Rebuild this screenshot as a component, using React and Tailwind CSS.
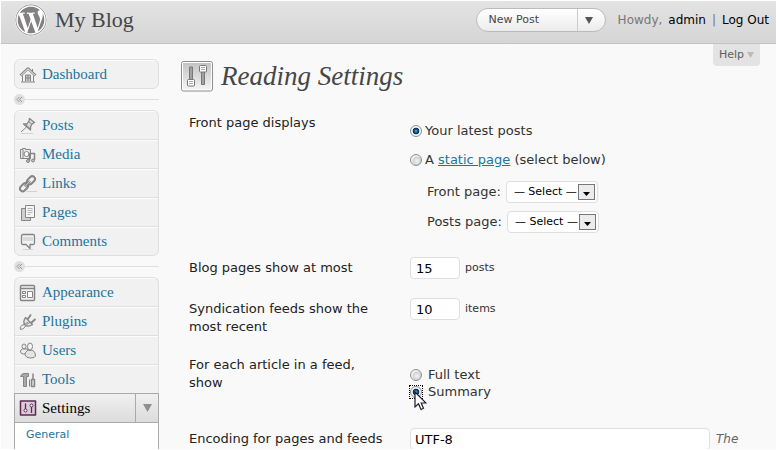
import React from 'react';
import { FaWordpress } from 'react-icons/fa';

const icons = {
  dashboard: (
    <>
      <path d="M1.500 9.500 9 2.500l7.500 7" strokeWidth="2.600" stroke="#8a8a8a" />
      <path d="M2 9.300 9 2.800l7 6.500" strokeWidth="1" stroke="#f2f2f2" />
      <path d="M3.500 9.500v6M14.500 9.500v6M2 16h14M13.500 3v3" />
      <path d="M6.500 15.500V9h5v6.500M9 9v6.500M6.500 12h5" fill="#c9c9c9" />
    </>
  ),
  posts: (
    <>
      <path d="M10.500 1.500 15.500 5.500l-2.500 1.500-1.500 3v3l-7-6h3.500l2-3z" fill="#dcdcdc" strokeWidth="1.300" />
      <path d="M9.500 4.500l3.500 3M7 8l4 3.500M7.500 10 2 15" />
      <path d="M2 16.500h12" stroke="#d2d2d2" />
    </>
  ),
  media: (
    <>
      <path d="M1.500 3.500h2v-1h3v1h5v9h-10z" fill="#e9e9e9" />
      <path d="M4 3.500v9" />
      <circle cx="7.500" cy="8" r="2.500" fill="#fff" />
      <path d="M10.500 15V7.500h5V14" strokeWidth="1.500" />
      <circle cx="9" cy="15" r="1.500" fill="#bbb" />
      <circle cx="14" cy="14.500" r="1.500" fill="#bbb" />
    </>
  ),
  links: (
    <>
      <rect x="7.500" y="2.500" width="9" height="5.500" rx="2.700" transform="rotate(-45 12 5.300)" strokeWidth="2" />
      <rect x="0.500" y="9.500" width="9" height="5.500" rx="2.700" transform="rotate(-45 5 12.300)" strokeWidth="2" />
      <path d="M6 11.500l5-5.500" stroke="#777" strokeWidth="2.600" />
      <path d="M6 11.500l5-5.500" stroke="#e6e6e6" />
      <path d="M8 16.500h10" stroke="#d2d2d2" />
    </>
  ),
  pages: (
    <>
      <path d="M2.500 4.500h9v12h-9z" fill="#cfcfcf" />
      <path d="M6.500 1.500h9v12h-9z" fill="#f6f6f6" />
      <path d="M8.500 4.500h5M8.500 6.500h5M8.500 8.500h5M8.500 10.500h3" stroke="#b5b5b5" />
    </>
  ),
  comments: (
    <>
      <path d="M4 1.500h10q1.500 0 1.500 1.500v7q0 1.500-1.500 1.500h-3v4l-4-4H4q-1.500 0-1.500-1.500V3q0-1.500 1.500-1.500z" fill="#f2f2f2" strokeWidth="1.300" />
      <path d="M4 4h10v4H4z" fill="#dadada" stroke="none" />
      <path d="M4 16.500h10" stroke="#d2d2d2" />
    </>
  ),
  appearance: (
    <>
      <rect x="1.500" y="1.500" width="14" height="15" rx="1" fill="#f3f3f3" strokeWidth="1.500" />
      <path d="M2 4.500h13" strokeWidth="1.500" />
      <path d="M3.500 7.500h3v2h-3zM3.500 11.500h3v2h-3zM8.500 7.500h5v6h-5z" fill="#fff" />
    </>
  ),
  plugins: (
    <>
      <path d="M6.500 4.500 13.500 11.500Q9 14.500 6 12 3.500 9 6.500 4.500z" fill="#e6e6e6" strokeWidth="1.300" />
      <path d="M8.500 6.500l3.500-5M12 10l4.500-4" strokeWidth="1.800" />
      <path d="M9 9l-3.500 2.500M11 9.500l-3.500 2" />
      <path d="M5 11.500Q0 13 1.500 16.500M6.500 13Q5 16.500 1.500 16.500" />
    </>
  ),
  users: (
    <>
      <ellipse cx="5" cy="4.500" rx="2" ry="2.500" fill="#eee" />
      <path d="M3.500 7Q1 8 1.500 10t3 2l4-1V7z" fill="#eee" />
      <ellipse cx="11" cy="4.500" rx="2.500" ry="3.500" fill="#f5f5f5" />
      <path d="M9 8Q5.500 10.500 6 13q1 3 5.500 3t5-2q.5-4-3.500-6-2 1-4 0z" fill="#e4e4e4" />
    </>
  ),
  tools: (
    <>
      <path d="M1.500 5.500Q2.500 2.500 5 2.500h4.500v3H7.500v10h-3v-10z" fill="#a9a9a9" />
      <path d="M12.500 8.500h3v7h-3zM14 8.500V2.500" fill="#ddd" strokeWidth="1.500" />
      <path d="M10.500 15.500v-7" />
    </>
  ),
  settings: (
    <>
      <rect x="1.500" y="2" width="15" height="14" fill="#dccbd8" stroke="#5a2a50" strokeWidth="1.500" />
      <path d="M6.500 4.500v5.500M12.500 8v6" stroke="#5a2a50" strokeWidth="1.300" />
      <circle cx="6.500" cy="11.500" r="1.500" fill="#fff" stroke="#5a2a50" />
      <circle cx="12.500" cy="6.500" r="1.500" fill="#fff" stroke="#5a2a50" />
    </>
  ),
};

const MenuIcon = ({ name }) => (
  <svg width="18" height="18" viewBox="0 0 18 18" fill="none" stroke="#858585" strokeLinejoin="round" aria-hidden="true">
    {icons[name]}
  </svg>
);

const MenuItem = ({ icon, label }) => (
  <li className="border-b border-[#dfdfdf] last:border-b-0">
    <a
      href={`#${icon}`}
      className="flex h-7 items-center gap-[5px] border-t border-[#fcfcfc] pl-1 font-['Liberation_Serif',serif] text-[15px] text-[#21759b]"
    >
      <MenuIcon name={icon} />
      {label}
    </a>
  </li>
);

const Separator = () => (
  <div className="flex h-[21px] items-center">
    <button type="button" aria-label="Collapse menu" className="flex size-[11px] items-center justify-center rounded-full bg-[#dfdfdf]">
      <svg width="7" height="7" viewBox="0 0 7 7" fill="none" stroke="#999" aria-hidden="true">
        <path d="M3.500 1 1 3.500 3.500 6M6 1 3.500 3.500 6 6" />
      </svg>
    </button>
    <span className="h-px flex-1 bg-[#dfdfdf]" />
  </div>
);

const Radio = ({ id, name, defaultChecked }) => (
  <input
    type="radio"
    id={id}
    name={name}
    defaultChecked={defaultChecked}
    className="size-3 shrink-0 appearance-none rounded-full border border-[#8e8f8f] bg-[radial-gradient(circle_at_60%_60%,#f4f4f4_0%,#d0d2d4_45%,#f4f4f4_62%)] checked:bg-[radial-gradient(circle,#4fc0ee_0%,#0f5f92_22%,#0b2b4c_42%,#f4f4f4_52%)]"
  />
);

const PageSelect = ({ id, label }) => (
  <div className="flex items-center gap-[5px]">
    <label htmlFor={id}>{label}</label>
    <div className="relative">
      <select
        id={id}
        className="block h-[22px] w-[92px] appearance-none rounded border border-[#dfdfdf] bg-white pl-[7px] text-[11px] text-black"
      >
        <option>— Select —</option>
      </select>
      <span className="pointer-events-none absolute top-[3px] right-[3px] flex h-4 w-[17px] items-center justify-center border border-[#777] bg-[#ececec] pt-1">
        <svg width="7" height="4" viewBox="0 0 7 4" aria-hidden="true">
          <path d="M0 0h7L3.500 4z" fill="#000" />
        </svg>
      </span>
    </div>
  </div>
);

const Header = () => (
  <header className="flex h-11 items-start justify-between border-t border-b border-t-white border-b-[#c3c3c3] bg-linear-to-b from-[#e3e3e3] to-[#d5d5d5] pr-[7px] pl-[14px]">
    <div className="flex items-center gap-2 pt-[3px]">
      <FaWordpress className="size-8 rounded-full bg-white text-[#828080]" />
      <h1 className="font-['Liberation_Serif',serif] text-[22px] leading-8 text-[#464646]">
        <a href="#blog">My Blog</a>
      </h1>
    </div>
    <div className="flex items-center gap-3 pt-[7px]">
      <div className="flex h-6 w-[130px] rounded-full border border-[#bbb] bg-linear-to-b from-white to-[#ececec] text-[11px] text-[#464646]">
        <button type="button" className="flex-1 pl-3 text-left">New Post</button>
        <button type="button" aria-label="More actions" className="flex w-7 items-center justify-center border-l border-[#ccc] pr-1">
          <svg width="8" height="7" viewBox="0 0 8 7" aria-hidden="true">
            <path d="M0 0h8L4 7z" fill="#555" />
          </svg>
        </button>
      </div>
      <div className="flex gap-[6px] text-[12px] whitespace-nowrap text-[#777]">
        <span>Howdy,</span>
        <a href="#profile" className="text-black">admin</a>
        <span>|</span>
        <a href="#logout" className="text-black">Log Out</a>
      </div>
    </div>
  </header>
);

const Sidebar = () => (
  <nav className="w-[145px] shrink-0 pt-[15px]">
    <ul className="overflow-hidden rounded-md border border-[#dfdfdf] bg-[#f1f1f1]">
      <MenuItem icon="dashboard" label="Dashboard" />
    </ul>
    <Separator />
    <ul className="overflow-hidden rounded-md border border-[#dfdfdf] bg-[#f1f1f1]">
      <MenuItem icon="posts" label="Posts" />
      <MenuItem icon="media" label="Media" />
      <MenuItem icon="links" label="Links" />
      <MenuItem icon="pages" label="Pages" />
      <MenuItem icon="comments" label="Comments" />
    </ul>
    <Separator />
    <ul className="overflow-hidden rounded-t-md border border-b-0 border-[#dfdfdf] bg-[#f1f1f1]">
      <MenuItem icon="appearance" label="Appearance" />
      <MenuItem icon="plugins" label="Plugins" />
      <MenuItem icon="users" label="Users" />
      <MenuItem icon="tools" label="Tools" />
    </ul>
    <div className="border border-b-0 border-[#aaa] bg-white pb-2">
      <div className="flex h-[29px] border-b border-[#aaa] bg-linear-to-b from-[#f0f0f0] to-[#dcdcdc]">
        <a
          href="#settings"
          className="flex flex-1 items-center gap-[5px] pl-1 font-['Liberation_Serif',serif] text-[15px] text-black"
        >
          <MenuIcon name="settings" />
          Settings
        </a>
        <button type="button" aria-label="Toggle settings menu" className="flex w-[23px] items-center justify-center border-l border-[#aaa]">
          <svg width="9" height="8" viewBox="0 0 9 8" aria-hidden="true">
            <path d="M0 0h9L4.500 8z" fill="#8f8f8f" />
          </svg>
        </button>
      </div>
      <a href="#general" className="block pl-[11px] text-[11px] leading-6 text-[#21759b]">General</a>
    </div>
  </nav>
);

const SettingsForm = () => (
  <table className="w-full text-left text-[13px] leading-[18px] text-[#333]">
    <tbody className="[&_th]:w-[229px] [&_th]:py-[10px] [&_th]:pr-5 [&_th]:pl-2 [&_th]:align-top [&_th]:font-normal [&_th]:text-[#222] [&_td]:align-top">
      <tr>
        <th scope="row">Front page displays</th>
        <td className="pt-[18px] pb-4">
          <div className="flex items-center gap-[3px]">
            <Radio id="latest" name="front" defaultChecked />
            <label htmlFor="latest">Your latest posts</label>
          </div>
          <div className="mt-[11px] flex items-center gap-[3px]">
            <Radio id="static" name="front" />
            <label htmlFor="static">
              A <a href="#pages" className="text-[#21759b] underline">static page</a> (select below)
            </label>
          </div>
          <div className="mt-3 flex flex-col gap-2 pl-[17px]">
            <PageSelect id="front-page" label="Front page:" />
            <PageSelect id="posts-page" label="Posts page:" />
          </div>
        </td>
      </tr>
      <tr>
        <th scope="row"><label htmlFor="posts-count">Blog pages show at most</label></th>
        <td className="pt-2 pb-[11px]">
          <div className="flex items-center gap-[5px] text-[11px]">
            <input id="posts-count" defaultValue="15" className="h-[22px] w-[50px] rounded border border-[#dfdfdf] bg-white px-[5px] text-[13px] text-black" />
            posts
          </div>
        </td>
      </tr>
      <tr>
        <th scope="row"><label htmlFor="feed-count">Syndication feeds show the most recent</label></th>
        <td className="pt-2 pb-[10px]">
          <div className="flex items-center gap-[5px] text-[11px]">
            <input id="feed-count" defaultValue="10" className="h-[22px] w-[50px] rounded border border-[#dfdfdf] bg-white px-[5px] text-[13px] text-black" />
            items
          </div>
        </td>
      </tr>
      <tr>
        <th scope="row">For each article in a feed, show</th>
        <td className="pt-5 pb-5 leading-[17px]">
          <div className="flex items-center gap-[6px]">
            <Radio id="full" name="feed" />
            <label htmlFor="full">Full text</label>
          </div>
          <div className="relative flex items-center gap-[6px]">
            <span className="flex outline-1 outline-dotted outline-black">
              <Radio id="summary" name="feed" defaultChecked />
            </span>
            <label htmlFor="summary">Summary</label>
            <svg className="pointer-events-none absolute top-2 left-1" width="13" height="20" viewBox="0 0 13 20" aria-hidden="true">
              <path d="M1 1v15l3.500-3.200L7 18.500l2.500-1.200L7.200 12H12z" fill="#fff" stroke="#1c1c30" strokeWidth="1.200" />
            </svg>
          </div>
        </td>
      </tr>
      <tr>
        <th scope="row"><label htmlFor="charset">Encoding for pages and feeds</label></th>
        <td className="pt-2">
          <div className="flex items-center gap-[6px]">
            <input id="charset" defaultValue="UTF-8" className="h-[22px] w-[300px] rounded border border-[#dfdfdf] bg-white px-1 text-[13px] text-black" />
            <em className="text-[12px] text-[#666]">The</em>
          </div>
        </td>
      </tr>
    </tbody>
  </table>
);

const App = () => (
  <div className="h-screen overflow-hidden border-b border-l border-white bg-[#f9f9f9] font-['DejaVu_Sans',sans-serif]">
    <Header />
    <div className="flex gap-[22px] pl-[13px]">
      <Sidebar />
      <main className="min-w-0 flex-1">
        <div className="flex items-start justify-between">
          <div className="flex items-center gap-2 pt-4">
            <svg width="32" height="31" viewBox="0 0 32 31" aria-hidden="true">
              <defs>
                <linearGradient id="panel" x1="0" y1="0" x2="0" y2="1">
                  <stop offset="0" stopColor="#c4c4c4" />
                  <stop offset="1" stopColor="#f4f4f4" />
                </linearGradient>
              </defs>
              <rect x="0.500" y="0.500" width="31" height="29.500" rx="2" fill="#fff" stroke="#8c8c8c" />
              <rect x="2" y="2" width="28" height="26.500" fill="url(#panel)" />
              <path d="M8.500 6h3v13h-3zM20.500 10h3v13.500h-3z" fill="#a2a2a2" stroke="#777" />
              <rect x="6.500" y="18.500" width="7" height="6.500" rx="1" fill="#fff" stroke="#777" />
              <rect x="18.500" y="4.500" width="7" height="6.500" rx="1" fill="#fff" stroke="#777" />
              <path d="M8 20.500h4M8 22.500h4M20 6.500h4M20 8.500h4" stroke="#aaa" />
            </svg>
            <h2 className="font-['Liberation_Serif',serif] text-[27px] leading-8 text-[#464646] italic">Reading Settings</h2>
          </div>
          <button type="button" className="mr-4 flex h-[22px] w-[47px] items-center justify-center gap-[3px] rounded-b bg-[#e3e3e3] text-[11px] text-[#606060]">
            Help
            <svg width="7" height="6" viewBox="0 0 7 6" aria-hidden="true">
              <path d="M0 0h7L3.500 6z" fill="#bbb" />
            </svg>
          </button>
        </div>
        <div className="pt-3">
          <SettingsForm />
        </div>
      </main>
    </div>
  </div>
);

export default App;
